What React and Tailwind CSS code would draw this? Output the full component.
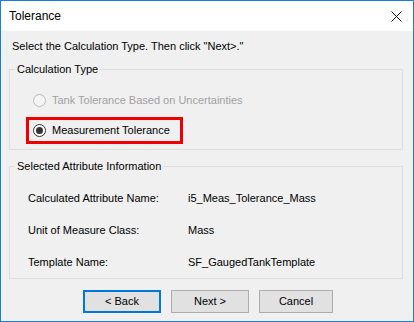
import React from "react";

function Radio({ checked, disabled }) {
  return (
    <div
      className={
        "flex h-[13px] w-[13px] shrink-0 items-center justify-center rounded-full border " +
        (disabled ? "border-[#bcbcbc] bg-[#f4f4f4]" : "border-[#333333] bg-white")
      }
    >
      {checked && <div className="h-[7px] w-[7px] rounded-full bg-[#333333]" />}
    </div>
  );
}

function Btn({ children, focused, w }) {
  return (
    <div
      className={
        "flex h-[23px] items-center justify-center bg-[#e1e1e1] " +
        w +
        " " +
        (focused ? "border-2 border-[#0078d7]" : "border border-[#adadad]")
      }
    >
      {children}
    </div>
  );
}

export default function App() {
  return (
    <div
      className="flex h-[322px] w-[414px] flex-col border border-[#1a7fd4] bg-[#f0f0f0] text-[11px] leading-[13px] text-black"
      style={{ fontFamily: '"Liberation Sans", Arial, sans-serif' }}
    >
      <div className="flex h-[30px] shrink-0 items-center justify-between bg-white pl-[8px] pr-[10px]">
        <span className="text-[12px] leading-[16px] text-black">Tolerance</span>
        <svg width="11" height="11" viewBox="0 0 11 11" className="mr-[1px]">
          <path d="M0.5 0.5 L10.5 10.5 M10.5 0.5 L0.5 10.5" stroke="#111" strokeWidth="1" fill="none" />
        </svg>
      </div>
      <div className="pl-[11px] pt-[9px]">Select the Calculation Type. Then click "Next&gt;."</div>

      <fieldset className="ml-[8px] mt-[10px] h-[87px] w-[394px] border border-[#dcdcdc]">
        <legend className="ml-[5px] px-[2px]">Calculation Type</legend>
        <div className="mt-[18px] flex items-center gap-[6px] pl-[23px] text-[#a0a0a0]">
          <Radio disabled />
          <span>Tank Tolerance Based on Uncertainties</span>
        </div>
        <div className="ml-[16px] mt-[10px] flex h-[27px] w-[157px] items-center gap-[6px] border-[3px] border-[#ee0000] pl-[4px]">
          <Radio checked />
          <span>Measurement Tolerance</span>
        </div>
      </fieldset>

      <fieldset className="ml-[8px] mt-[10px] h-[119px] w-[394px] border border-[#dcdcdc]">
        <legend className="ml-[5px] px-[2px]">Selected Attribute Information</legend>
        <div className="mt-[19px] flex flex-col gap-[19px] pl-[18px]">
          {[
            ["Calculated Attribute Name:", "i5_Meas_Tolerance_Mass"],
            ["Unit of Measure Class:", "Mass"],
            ["Template Name:", "SF_GaugedTankTemplate"],
          ].map(([k, v]) => (
            <div key={k} className="flex h-[13px]">
              <span className="w-[160px]">{k}</span>
              <span>{v}</span>
            </div>
          ))}
        </div>
      </fieldset>

      <div className="ml-[82px] mt-[11px] flex gap-[10px]">
        <Btn focused w="w-[78px]">&lt; Back</Btn>
        <Btn w="w-[78px]">Next &gt;</Btn>
        <Btn w="w-[74px]">Cancel</Btn>
      </div>
    </div>
  );
}
